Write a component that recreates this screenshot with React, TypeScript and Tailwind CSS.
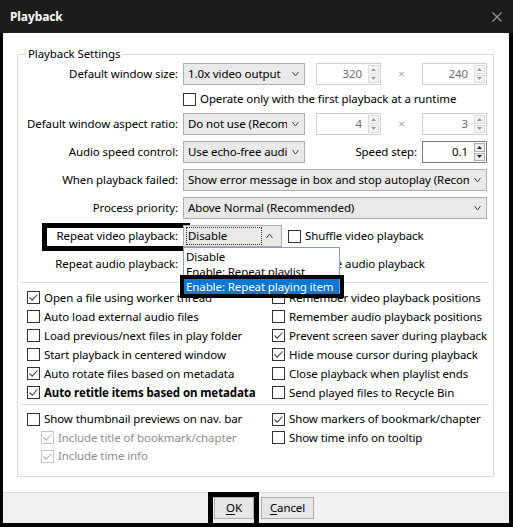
import React from "react";

const Chevron = ({ up = false }: { up?: boolean }) => (
  <svg width="7" height="6" viewBox="0 0 7 6" className="shrink-0">
    <path
      d={up ? "M0.5 5 L3.5 1 L6.5 5" : "M0.5 1 L3.5 5 L6.5 1"}
      fill="none"
      stroke="#444"
      strokeWidth="1"
    />
  </svg>
);

const Combo = ({ text, className = "" }: { text: string; className?: string }) => (
  <div
    className={`h-[22px] min-w-0 border border-[#adadad] bg-[#e9e9e9] flex items-center pl-[4px] pr-[5px] ${className}`}
  >
    <span className="flex-1 min-w-0 overflow-hidden whitespace-nowrap">{text}</span>
    <span className="pl-[5px]">
      <Chevron />
    </span>
  </div>
);

const Spin = ({ value, disabled = false }: { value: string; disabled?: boolean }) => {
  const arrow = disabled ? "#9a9a9a" : "#222";
  const btn = disabled
    ? "border-[#dadada] bg-[#f3f3f3]"
    : "border-[#adadad] bg-[#ececec]";
  return (
    <div
      className={`h-[22px] w-[65px] border bg-white flex items-stretch shrink-0 ${
        disabled ? "border-[#cfcfcf] text-[#6d6d6d]" : "border-[#7a7a7a] text-black"
      }`}
    >
      <span className="flex-1 text-right pr-[6px] leading-[20px]">{value}</span>
      <div className="w-[12px] flex flex-col gap-[1px] py-[1px] pr-[1px]">
        <div className={`flex-1 border flex items-center justify-center ${btn}`}>
          <svg width="5" height="3" viewBox="0 0 5 3">
            <path d="M0 3 L2.5 0 L5 3 Z" fill={arrow} />
          </svg>
        </div>
        <div className={`flex-1 border flex items-center justify-center ${btn}`}>
          <svg width="5" height="3" viewBox="0 0 5 3">
            <path d="M0 0 L2.5 3 L5 0 Z" fill={arrow} />
          </svg>
        </div>
      </div>
    </div>
  );
};

const CheckBox = ({
  label,
  checked = false,
  disabled = false,
  bold = false,
  className = "",
}: {
  label: string;
  checked?: boolean;
  disabled?: boolean;
  bold?: boolean;
  className?: string;
}) => (
  <div className={`flex items-center gap-[4px] whitespace-nowrap ${className}`}>
    <span
      className={`w-[13px] h-[13px] border bg-white flex items-center justify-center shrink-0 ${
        disabled ? "border-[#c4c4c4]" : "border-[#333333]"
      }`}
    >
      {checked && (
        <svg width="11" height="11" viewBox="0 0 11 11">
          <path
            d="M1.5 5.5 L4.2 8.2 L9.5 2.5"
            fill="none"
            stroke={disabled ? "#b5b5b5" : "#444"}
            strokeWidth="1.1"
          />
        </svg>
      )}
    </span>
    <span
      className={`${disabled ? "text-[#8d8d8d]" : "text-black"} ${bold ? "font-bold" : ""}`}
    >
      {label}
    </span>
  </div>
);

const Label = ({ children }: { children: React.ReactNode }) => (
  <div className="w-[165px] pr-[5px] text-right shrink-0 whitespace-nowrap">{children}</div>
);

const Times = () => (
  <div className="w-[41px] shrink-0 text-center text-[#a8a8a8]">×</div>
);

export default function App() {
  return (
    <div className="w-[513px] h-[527px] bg-black pl-[3px] pr-[4px] pb-[4px] flex flex-col font-[family-name:Segoe_UI,Noto_Sans,sans-serif] text-[11.5px] tracking-[-0.1px] text-black overflow-hidden">
      {/* Title bar */}
      <div className="h-[33px] bg-[#1c1c1c] flex items-center justify-between pl-[10px] pr-[7px] -ml-[3px] -mr-[4px] shrink-0">
        <span className="text-white font-bold text-[12px]">Playback</span>
        <svg width="10" height="10" viewBox="0 0 10 10" className="mr-[4px]">
          <path d="M0.5 0.5 L9.5 9.5 M9.5 0.5 L0.5 9.5" stroke="#9b9b9b" strokeWidth="1.1" />
        </svg>
      </div>

      {/* Body */}
      <div className="flex-1 bg-white flex flex-col">
        <div className="pl-[14px] pr-[15px] pt-[13px]">
          <fieldset className="min-w-0 border border-[#dcdcdc] pb-[10px]">
            <legend className="ml-[8px] px-[2px] leading-[16px]">Playback Settings</legend>

            <div className="flex flex-col pr-[6px] leading-[20px]">
              <div className="flex items-center h-[22px] mt-[1px]">
                <Label>Default window size:</Label>
                <Combo text="1.0x video output" className="w-[122px] shrink-0" />
                <div className="w-[12px]" />
                <Spin value="320" disabled />
                <Times />
                <Spin value="240" disabled />
              </div>

              <div className="flex items-center h-[16px] mt-[6px]">
                <Label>{""}</Label>
                <CheckBox label="Operate only with the first playback at a runtime" />
              </div>

              <div className="flex items-center h-[22px] mt-[6px]">
                <Label>Default window aspect ratio:</Label>
                <Combo text="Do not use (Recommended)" className="w-[122px] shrink-0" />
                <div className="w-[12px]" />
                <Spin value="4" disabled />
                <Times />
                <Spin value="3" disabled />
              </div>

              <div className="flex items-center h-[22px] mt-[6px]">
                <Label>Audio speed control:</Label>
                <Combo text="Use echo-free audio" className="w-[122px] shrink-0" />
                <div className="flex-1 text-right pr-[5px]">Speed step:</div>
                <Spin value="0.1" />
              </div>

              <div className="flex items-center h-[22px] mt-[6px]">
                <Label>When playback failed:</Label>
                <Combo
                  text="Show error message in box and stop autoplay (Recommended)"
                  className="flex-1"
                />
              </div>

              <div className="flex items-center h-[22px] mt-[6px]">
                <Label>Process priority:</Label>
                <Combo text="Above Normal (Recommended)" className="flex-1" />
              </div>

              <div className="flex items-center h-[22px] mt-[6px]">
                <div className="relative">
                  <Label>Repeat video playback:</Label>
                  <span className="absolute left-[24px] -right-[7px] -top-[3px] -bottom-[5px] border-[5px] border-black" />
                </div>
                <div className="relative shrink-0">
                  <div className="h-[22px] w-[99px] border border-[#adadad] bg-[#e9e9e9] flex items-center pl-[2px] pr-[8px]">
                    <span className="w-[76px] h-[18px] border border-dotted border-[#333] leading-[16px] pl-[1px]">
                      Disable
                    </span>
                    <span className="flex-1 flex justify-end">
                      <Chevron up />
                    </span>
                  </div>
                  {/* Open list */}
                  <div className="absolute left-0 top-[22px] w-[157px] bg-white border border-[#7f9fc8] z-10 leading-[15px] pt-[1px] pb-[1px] whitespace-nowrap">
                    <div className="h-[15px] pl-[2px]">Disable</div>
                    <div className="h-[15px] pl-[2px]">Enable: Repeat playlist</div>
                    <div className="relative h-[15px] pl-[2px] bg-[#0078d7] text-white">
                      Enable: Repeat playing item
                      <span className="absolute -left-[4px] -right-[5px] -top-[4px] -bottom-[4px] border-[4px] border-black" />
                    </div>
                  </div>
                </div>
                <CheckBox label="Shuffle video playback" className="ml-[6px]" />
              </div>

              <div className="flex items-center h-[22px] mt-[6px]">
                <Label>Repeat audio playback:</Label>
                <Combo text="Disable" className="w-[99px] shrink-0" />
                <CheckBox label="Shuffle audio playback" className="ml-[6px]" />
              </div>
            </div>

            <div className="h-px bg-[#dcdcdc] mx-[4px] mt-[7px]" />

            <div className="grid grid-cols-[245px_1fr] pl-[9px] mt-[5px] leading-[19px]">
              <CheckBox label="Open a file using worker thread" checked className="h-[19px]" />
              <CheckBox label="Remember video playback positions" className="h-[19px]" />
              <CheckBox label="Auto load external audio files" className="h-[19px]" />
              <CheckBox label="Remember audio playback positions" className="h-[19px]" />
              <CheckBox label="Load previous/next files in play folder" className="h-[19px]" />
              <CheckBox label="Prevent screen saver during playback" checked className="h-[19px]" />
              <CheckBox label="Start playback in centered window" className="h-[19px]" />
              <CheckBox label="Hide mouse cursor during playback" checked className="h-[19px]" />
              <CheckBox label="Auto rotate files based on metadata" checked className="h-[19px]" />
              <CheckBox label="Close playback when playlist ends" className="h-[19px]" />
              <CheckBox label="Auto retitle items based on metadata" checked bold className="h-[19px]" />
              <CheckBox label="Send played files to Recycle Bin" className="h-[19px]" />
            </div>

            <div className="h-px bg-[#dcdcdc] mx-[4px] mt-[2px]" />

            <div className="grid grid-cols-[245px_1fr] pl-[9px] mt-[5px] leading-[18px]">
              <div className="flex flex-col">
                <CheckBox label="Show thumbnail previews on nav. bar" className="h-[18.5px]" />
                <CheckBox
                  label="Include title of bookmark/chapter"
                  checked
                  disabled
                  className="h-[18.5px] pl-[14px]"
                />
                <CheckBox label="Include time info" checked disabled className="h-[18.5px] pl-[14px]" />
              </div>
              <div className="flex flex-col">
                <CheckBox label="Show markers of bookmark/chapter" checked className="h-[18.5px]" />
                <CheckBox label="Show time info on tooltip" className="h-[18.5px]" />
              </div>
            </div>
          </fieldset>
        </div>

        <div className="flex-1" />

        {/* Footer */}
        <div className="h-[31px] bg-[#f0f0f0] border-t border-[#dfdfdf] flex items-center justify-center gap-[7px] pl-[16px] shrink-0">
          <div className="relative">
            <button className="h-[22px] w-[40px] border border-[#adadad] bg-[#e5e5e5] leading-[20px]">
              <span className="underline underline-offset-2">O</span>K
            </button>
            <span className="absolute -left-[6px] -right-[5px] -top-[5px] -bottom-[12px] border-[5px] border-black" />
          </div>
          <button className="h-[22px] w-[53px] border border-[#adadad] bg-[#e5e5e5] leading-[20px]">
            <span className="underline underline-offset-2">C</span>ancel
          </button>
        </div>
      </div>
    </div>
  );
}
